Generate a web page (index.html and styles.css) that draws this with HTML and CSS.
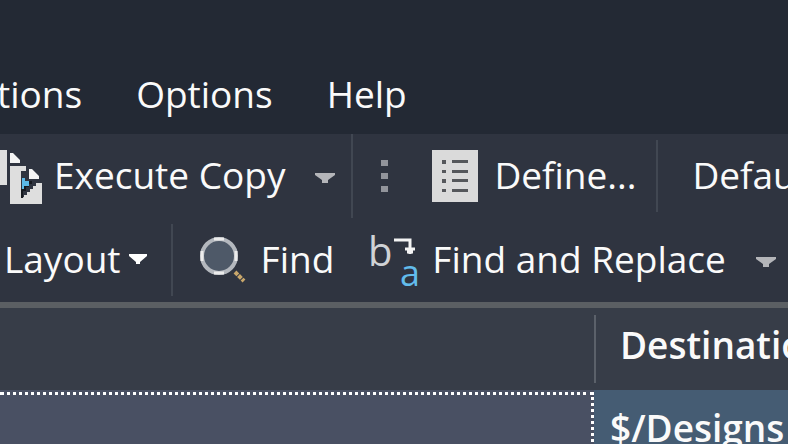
FILE: index.html
```html
<!DOCTYPE html>
<html lang="en">
<head>
<meta charset="utf-8">
<title>Copy</title>
<link rel="stylesheet" href="styles.css">
</head>
<body>
<nav class="menu">
  <button type="button">tions</button>
  <button type="button">Options</button>
  <button type="button">Help</button>
</nav>
<div class="toolbar">
  <button type="button" class="execute">
    <svg width="44" height="52" viewBox="0 0 44 52" aria-hidden="true">
      <path fill="#dedede" d="M0 0h7v35H0zM10 16h16v5h-5v27l3-1v-2h3v-3h3v-3h3v-3h3v-3h6v21H10z"/>
      <path fill="#f4f4f4" d="M10 3h3l7 7v3H10zM29 19h3l7 7v3H29z"/>
      <path fill="#5bb9e8" d="M22 28h3v3h4v5h-4v3h-3z"/>
      <path fill="#16191f" d="M21 39h3v-3h5v-5h3v3h-3v3h-3v4h-3v7h-2z"/>
    </svg>
    <span>Execute Copy</span>
  </button>
  <button type="button" class="drop" aria-label="Execute Copy menu">
    <svg width="20" height="10" viewBox="0 0 20 10" aria-hidden="true"><path fill="#b4b5b9" d="M0 0h20v2l-7 5v3H7V7L0 2z"/></svg>
  </button>
  <span class="divider full"></span>
  <svg class="grip" width="7" height="32" viewBox="0 0 7 32" aria-hidden="true"><path fill="#92949b" d="M0 0h7v6H0zM0 13h7v6H0zM0 26h7v6H0z"/></svg>
  <button type="button" class="define">
    <svg width="46" height="52" viewBox="0 0 46 52" aria-hidden="true">
      <path fill="#dadada" d="M0 0h46v52H0z"/>
      <path fill="#55575b" d="M10 10h4v4h-4zM20 10h16v3H20zM10 20h4v3h-4zM20 20h16v3H20zM10 29h4v4h-4zM20 29h16v3H20zM10 39h4v3h-4zM20 39h16v3H20z"/>
    </svg>
    <span>Define...</span>
  </button>
  <span class="divider"></span>
  <button type="button" class="default"><span>Default</span></button>
</div>
<div class="toolbar">
  <button type="button" class="layout">
    <span>Layout</span>
    <svg width="18" height="12" viewBox="0 0 18 12" aria-hidden="true"><path fill="#fff" d="M0 0h18v2l-7 6v2H7V8L0 2z"/></svg>
  </button>
  <span class="divider"></span>
  <button type="button" class="find">
    <svg width="46" height="50" viewBox="0 0 46 50" aria-hidden="true">
      <circle cx="20" cy="21" r="17" fill="#4e5968" stroke="#b4b8be" stroke-width="4"/>
      <path d="M15 4h10M15 38h10M3 16v10M37 16v10" stroke="#ececec" stroke-width="3"/>
      <path d="M36 37l9 9" stroke="#c9a76b" stroke-width="4" stroke-dasharray="4 1"/>
    </svg>
    <span>Find</span>
  </button>
  <button type="button" class="replace">
    <svg width="48" height="56" viewBox="0 0 48 56" aria-hidden="true">
      <text class="letter-b" x="-4" y="34">b</text>
      <path d="M22 8h16v14M33 17h10M35 20h6" fill="none" stroke="#f4f4f4" stroke-width="3"/>
      <text class="letter-a" x="28" y="54">a</text>
    </svg>
    <span>Find and Replace</span>
  </button>
  <button type="button" class="drop" aria-label="Find and Replace menu">
    <svg width="20" height="10" viewBox="0 0 20 10" aria-hidden="true"><path fill="#b4b5b9" d="M0 0h20v2l-7 5v3H7V7L0 2z"/></svg>
  </button>
</div>
<table class="files">
  <colgroup><col class="source"><col></colgroup>
  <thead>
    <tr><th aria-label="Source"></th><th><div class="heading">Destination</div></th></tr>
  </thead>
  <tbody>
    <tr><td class="source-cell"><div class="focus"></div></td><td class="path">$/Designs</td></tr>
  </tbody>
</table>
</body>
</html>
```
FILE: styles.css
```css
* { box-sizing: border-box; }

html { height: 100%; }

body {
  margin: 0;
  height: 100%;
  overflow: hidden;
  background: #232934;
  color: #fafafa;
  font: 37px/52px "Open Sans", "Noto Sans", sans-serif;
  white-space: nowrap;
}

button {
  display: flex;
  flex: none;
  align-items: center;
  padding: 0;
  border: 0;
  background: none;
  color: inherit;
  font: inherit;
}

svg { display: block; flex: none; overflow: visible; }

.menu {
  display: flex;
  gap: 54px;
  margin-left: -3px;
  padding: 68px 0 14px;
}

.toolbar {
  display: flex;
  align-items: center;
  height: 84px;
  overflow: hidden;
  background: #2f3440;
}

.toolbar button span { padding-bottom: 3px; }

.divider {
  flex: none;
  width: 2px;
  height: 72px;
  background: #414752;
}

.divider.full { height: 84px; }

.execute { gap: 10px; }
.drop { padding: 4px 16px 0 30px; }
.grip { margin: 0 44px 0 28px; }
.define { gap: 16px; margin-right: 20px; }
.default { margin-left: 34px; }
.layout { gap: 8px; padding: 0 24px 0 4px; }
.find { gap: 16px; margin-left: 26px; }
.replace { gap: 12px; margin-left: 38px; }

.letter-b {
  fill: #d0d2d5;
  font: 400 40px "Open Sans", sans-serif;
}

.letter-a {
  fill: #62bcec;
  font: 36px "Open Sans", sans-serif;
}

.files {
  width: 100%;
  table-layout: fixed;
  border-collapse: separate;
  border-spacing: 0;
  border-top: 6px solid #5b5f63;
}

.source { width: 594px; }

.files th {
  height: 82px;
  padding: 0;
  overflow: hidden;
  background: #373d48;
  font-weight: 600;
  text-align: left;
}

.heading {
  height: 68px;
  padding: 4px 0 0 24px;
  border-left: 2px solid #5b616a;
}

.files td {
  height: 76px;
  padding: 0;
  overflow: hidden;
  font-weight: 600;
  vertical-align: middle;
}

.files .source-cell {
  padding-top: 2px;
  background: #495063;
}

.focus {
  height: 74px;
  border-top: 3px dotted #fff;
  border-right: 3px dotted #fff;
}

.files .path {
  padding-left: 16px;
  background: #455c73;
}
```
